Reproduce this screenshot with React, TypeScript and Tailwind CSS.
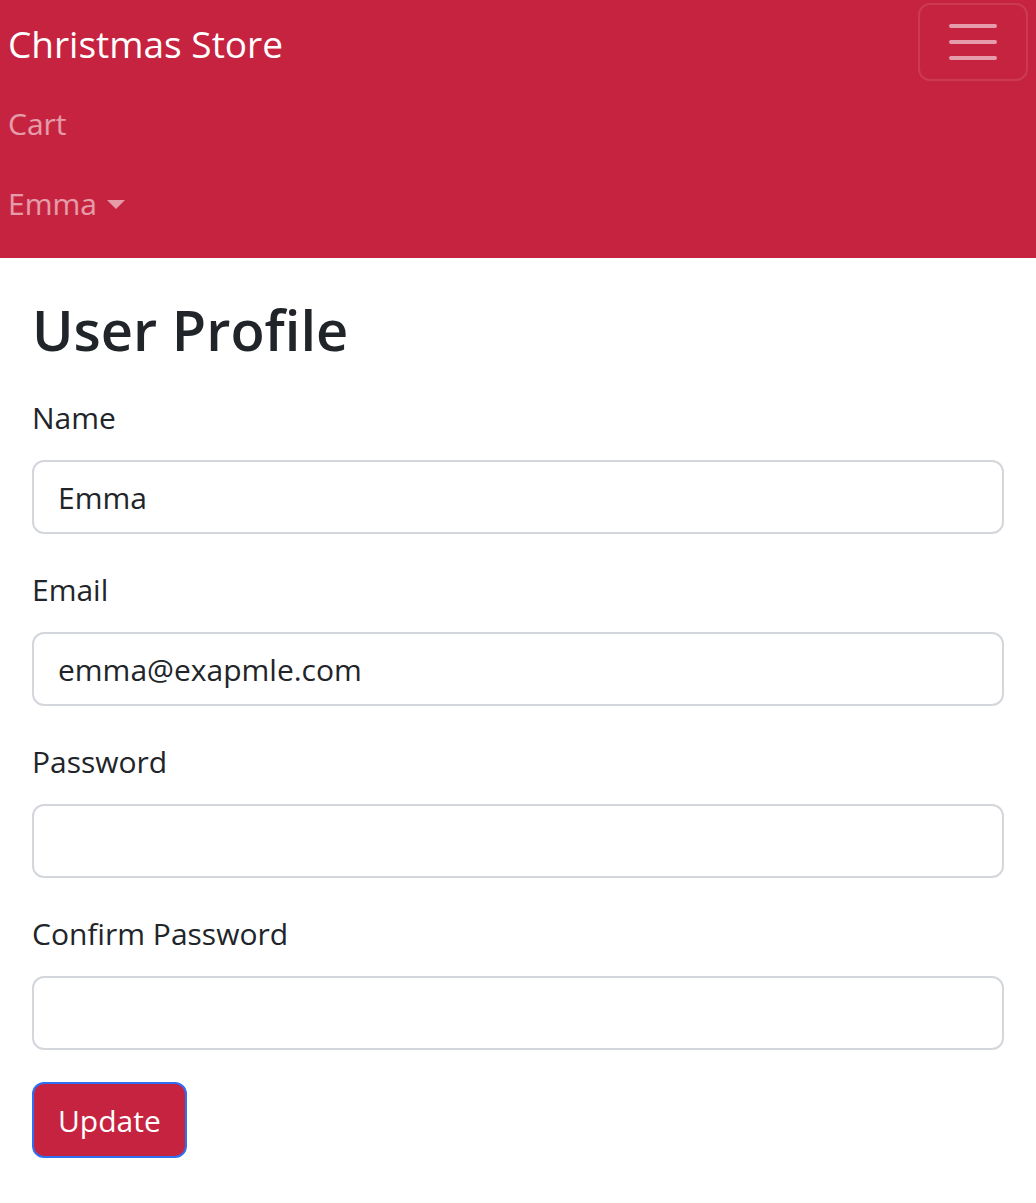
const font = { fontFamily: '"Open Sans", "Noto Sans", sans-serif' };

const Field = ({ label, value, type = "text" }: { label: string; value?: string; type?: string }) => (
  <div className="mb-[32px]">
    <label className="block h-[48px] leading-[48px] mb-[18px] text-[30px] text-[#212529]">{label}</label>
    <input
      type={type}
      defaultValue={value}
      className="block w-full h-[74px] px-[24px] border-2 border-[#d3d6db] rounded-[12px] text-[30px] text-[#212529] bg-white outline-none"
    />
  </div>
);

export default function App() {
  return (
    <div className="min-h-[1203px] bg-white" style={font}>
      {/* NAVBAR */}
      <nav className="bg-[#c62340] pt-[3px] pb-[17px] pl-[8px] pr-[8px]">
        <div className="flex items-center justify-between h-[78px]">
          <span className="text-[37px] text-white mt-[3px]">Christmas Store</span>
          <button className="w-[110px] h-[78px] border-2 border-white/10 rounded-[12px] flex items-center justify-center">
            <svg width="48" height="36" viewBox="0 0 48 36">
              <path d="M2 2h44M2 18h44M2 34h44" stroke="rgba(255,255,255,0.55)" strokeWidth="4" strokeLinecap="round" />
            </svg>
          </button>
        </div>
        <div className="h-[80px] pt-[4px] flex items-center text-[30px] text-white/55">Cart</div>
        <div className="h-[80px] pt-[4px] flex items-center text-[30px] text-white/55">
          Emma
          <span className="ml-[10px] mt-[2px] w-0 h-0 border-l-[9px] border-r-[9px] border-t-[9px] border-l-transparent border-r-transparent border-t-white/55" />
        </div>
      </nav>

      {/* CONTENT */}
      <div className="px-[32px] pt-[36px]">
        <h1 className="text-[56px] font-semibold leading-[70px] text-[#212529] mb-[30px]">User Profile</h1>
        <Field label="Name" value="Emma" />
        <Field label="Email" value="emma@exapmle.com" />
        <Field label="Password" type="password" />
        <Field label="Confirm Password" type="password" />
        <button className="h-[76px] px-[24px] bg-[#c62340] text-white text-[30px] rounded-[12px] border-2 border-[#2f6ff2]">
          Update
        </button>
      </div>
    </div>
  );
}
